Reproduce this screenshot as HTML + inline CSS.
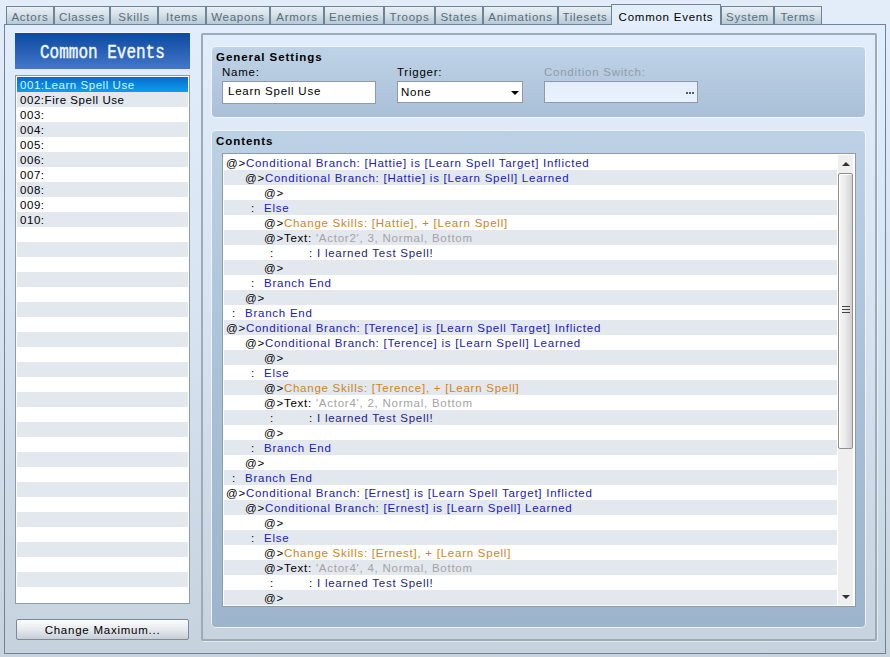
<!DOCTYPE html><html><head><meta charset="utf-8"><style>
*{box-sizing:border-box;margin:0;padding:0}
html,body{width:890px;height:657px;overflow:hidden}
body{position:relative;background:linear-gradient(#e3edf9 0%,#d8e3ef 45%,#c8d3de 100%);font-family:"Liberation Sans", sans-serif;font-size:11.5px;color:#000;letter-spacing:0.75px}
.a{position:absolute}
.t{position:absolute;white-space:pre;line-height:15px;height:15px}
.tab{position:absolute;top:6px;height:18px;border:1px solid #6f8296;border-bottom:none;
  background:linear-gradient(#e8eff5 0%,#d8e3eb 40%,#b5cad3 100%);color:#5a6b7c;text-align:center;line-height:15px;padding-top:3px}
.tabsel{position:absolute;top:4px;height:21px;border:1px solid #6f8296;border-bottom:none;background:#e2eefa;color:#000;text-align:center;line-height:15px;padding-top:5px;z-index:3}
#panel{left:4px;top:24px;width:882px;height:630px;border:1px solid #6f8296;background:linear-gradient(#e1edfa 0%,#d9e5f2 40%,#c6d2de 100%)}
#title{left:15px;top:33px;width:175px;height:36px;background:linear-gradient(#0b4b9e 0%,#2a62b8 55%,#4577c8 100%);box-shadow:0 -1px 0 #f2f8ff}
#title span{position:absolute;left:25px;top:9px;font-family:"Liberation Mono",monospace;font-size:16px;color:#f2fbff;-webkit-text-stroke:0.35px #f2fbff;letter-spacing:0;transform:scaleY(1.25);transform-origin:0 0;line-height:18px}
#llist{left:15px;top:75px;width:175px;height:529px;border:1px solid #8d9bab;background:#fff;overflow:hidden}
.row{position:absolute;height:15px}
.g{background:#e3e8ef}
#btn{left:16px;top:619px;width:173px;height:21px;border:1px solid #7c8a99;border-radius:2px;background:linear-gradient(#fbfcfd 0%,#e6e9ee 50%,#c9ced6 100%);text-align:center;line-height:17px;padding-top:2px}
#frame{left:201px;top:33px;width:676px;height:608px;border:2px solid #9babba;border-radius:2px;box-shadow:1px 1px 0 rgba(245,250,255,0.6)}
.grp{position:absolute;left:212px;width:653px;border-radius:4px;box-shadow:0 0 0 1px rgba(242,248,255,0.85)}
#g1{top:47px;height:70px;background:linear-gradient(#bfd3e6,#aac0d8)}
#g2{top:131px;height:496px;background:linear-gradient(#bcd1e4 0%,#a8bfd7 55%,#9cb4cc 100%)}
.lbl{position:absolute;white-space:pre;line-height:15px}
.box{position:absolute;height:22px;border:1px solid #8c9aab;background:#fff}
#clist{left:222px;top:153px;width:634px;height:454px;border:1px solid #8d9bab;background:#fff;overflow:hidden}
.bl{color:#2020b4}
.or{color:#d08420}
.gy{color:#a3a3a3}
.nv{color:#26267a}
</style></head><body><div class="a" id="panel"></div>
<div class="tab" style="left:6px;width:48px">Actors</div>
<div class="tab" style="left:54px;width:56px">Classes</div>
<div class="tab" style="left:110px;width:48px">Skills</div>
<div class="tab" style="left:158px;width:48px">Items</div>
<div class="tab" style="left:206px;width:64px">Weapons</div>
<div class="tab" style="left:270px;width:54px">Armors</div>
<div class="tab" style="left:324px;width:60px">Enemies</div>
<div class="tab" style="left:384px;width:51px">Troops</div>
<div class="tab" style="left:435px;width:48px">States</div>
<div class="tab" style="left:483px;width:75px">Animations</div>
<div class="tab" style="left:558px;width:54px">Tilesets</div>
<div class="tabsel" style="left:611px;width:110px">Common Events</div>
<div class="tab" style="left:721px;width:53px">System</div>
<div class="tab" style="left:774px;width:48px">Terms</div>
<div class="a" id="title"><span>Common Events</span></div>
<div class="a" id="llist" style="letter-spacing:0.55px"><div class="row" style="left:1px;top:1px;width:171px;background:linear-gradient(#0b6acb,#0a9ff0);color:#cff9ff"><span class="t" style="left:3px;top:1px">001:Learn Spell Use</span></div><div class="row" style="left:1px;top:16px;width:171px;background:#e3e8ef"><span class="t" style="left:3px;top:1px">002:Fire Spell Use</span></div><div class="row" style="left:1px;top:31px;width:171px;"><span class="t" style="left:3px;top:1px">003:</span></div><div class="row" style="left:1px;top:46px;width:171px;background:#e3e8ef"><span class="t" style="left:3px;top:1px">004:</span></div><div class="row" style="left:1px;top:61px;width:171px;"><span class="t" style="left:3px;top:1px">005:</span></div><div class="row" style="left:1px;top:76px;width:171px;background:#e3e8ef"><span class="t" style="left:3px;top:1px">006:</span></div><div class="row" style="left:1px;top:91px;width:171px;"><span class="t" style="left:3px;top:1px">007:</span></div><div class="row" style="left:1px;top:106px;width:171px;background:#e3e8ef"><span class="t" style="left:3px;top:1px">008:</span></div><div class="row" style="left:1px;top:121px;width:171px;"><span class="t" style="left:3px;top:1px">009:</span></div><div class="row" style="left:1px;top:136px;width:171px;background:#e3e8ef"><span class="t" style="left:3px;top:1px">010:</span></div><div class="row" style="left:1px;top:151px;width:171px;"><span class="t" style="left:3px;top:1px"></span></div><div class="row" style="left:1px;top:166px;width:171px;background:#e3e8ef"><span class="t" style="left:3px;top:1px"></span></div><div class="row" style="left:1px;top:181px;width:171px;"><span class="t" style="left:3px;top:1px"></span></div><div class="row" style="left:1px;top:196px;width:171px;background:#e3e8ef"><span class="t" style="left:3px;top:1px"></span></div><div class="row" style="left:1px;top:211px;width:171px;"><span class="t" style="left:3px;top:1px"></span></div><div class="row" style="left:1px;top:226px;width:171px;background:#e3e8ef"><span class="t" style="left:3px;top:1px"></span></div><div class="row" style="left:1px;top:241px;width:171px;"><span class="t" style="left:3px;top:1px"></span></div><div class="row" style="left:1px;top:256px;width:171px;background:#e3e8ef"><span class="t" style="left:3px;top:1px"></span></div><div class="row" style="left:1px;top:271px;width:171px;"><span class="t" style="left:3px;top:1px"></span></div><div class="row" style="left:1px;top:286px;width:171px;background:#e3e8ef"><span class="t" style="left:3px;top:1px"></span></div><div class="row" style="left:1px;top:301px;width:171px;"><span class="t" style="left:3px;top:1px"></span></div><div class="row" style="left:1px;top:316px;width:171px;background:#e3e8ef"><span class="t" style="left:3px;top:1px"></span></div><div class="row" style="left:1px;top:331px;width:171px;"><span class="t" style="left:3px;top:1px"></span></div><div class="row" style="left:1px;top:346px;width:171px;background:#e3e8ef"><span class="t" style="left:3px;top:1px"></span></div><div class="row" style="left:1px;top:361px;width:171px;"><span class="t" style="left:3px;top:1px"></span></div><div class="row" style="left:1px;top:376px;width:171px;background:#e3e8ef"><span class="t" style="left:3px;top:1px"></span></div><div class="row" style="left:1px;top:391px;width:171px;"><span class="t" style="left:3px;top:1px"></span></div><div class="row" style="left:1px;top:406px;width:171px;background:#e3e8ef"><span class="t" style="left:3px;top:1px"></span></div><div class="row" style="left:1px;top:421px;width:171px;"><span class="t" style="left:3px;top:1px"></span></div><div class="row" style="left:1px;top:436px;width:171px;background:#e3e8ef"><span class="t" style="left:3px;top:1px"></span></div><div class="row" style="left:1px;top:451px;width:171px;"><span class="t" style="left:3px;top:1px"></span></div><div class="row" style="left:1px;top:466px;width:171px;background:#e3e8ef"><span class="t" style="left:3px;top:1px"></span></div><div class="row" style="left:1px;top:481px;width:171px;"><span class="t" style="left:3px;top:1px"></span></div><div class="row" style="left:1px;top:496px;width:171px;background:#e3e8ef"><span class="t" style="left:3px;top:1px"></span></div><div class="row" style="left:1px;top:511px;width:171px;"><span class="t" style="left:3px;top:1px"></span></div></div>
<div class="a" id="btn">Change Maximum...</div>
<div class="a" id="frame"></div>
<div class="grp" id="g1"></div>
<div class="grp" id="g2"></div>
<div class="lbl" style="left:216px;top:50px;font-weight:bold;font-size:11.5px;letter-spacing:0.95px">General Settings</div>
<div class="lbl" style="left:222px;top:65px">Name:</div>
<div class="lbl" style="left:397px;top:65px">Trigger:</div>
<div class="lbl" style="left:544px;top:65px;color:#8e9cab">Condition Switch:</div>
<div class="box" style="left:222px;top:81px;width:154px;height:23px"><span class="t" style="left:5px;top:2px">Learn Spell Use</span></div>
<div class="box" style="left:397px;top:81px;width:126px"><span class="t" style="left:3px;top:3px">None</span><svg class="a" style="left:113px;top:9px" width="8" height="5"><path d="M0 0H8L4 4Z" fill="#000"/></svg></div>
<div class="box" style="left:544px;top:81px;width:154px;background:linear-gradient(#e2edf9,#eaf3fd)"><div class="a" style="left:141px;top:10px;width:2px;height:2px;background:#5a5a5a"></div><div class="a" style="left:144px;top:10px;width:2px;height:2px;background:#5a5a5a"></div><div class="a" style="left:147px;top:10px;width:2px;height:2px;background:#5a5a5a"></div></div>
<div class="lbl" style="left:216px;top:134px;font-weight:bold;font-size:11.5px;letter-spacing:0.95px">Contents</div>
<div class="a" id="clist"><div class="row" style="left:1px;top:1px;width:613px;"></div><div class="row" style="left:1px;top:16px;width:613px;background:#e3e8ef"></div><div class="row" style="left:1px;top:31px;width:613px;"></div><div class="row" style="left:1px;top:46px;width:613px;background:#e3e8ef"></div><div class="row" style="left:1px;top:61px;width:613px;"></div><div class="row" style="left:1px;top:76px;width:613px;background:#e3e8ef"></div><div class="row" style="left:1px;top:91px;width:613px;"></div><div class="row" style="left:1px;top:106px;width:613px;background:#e3e8ef"></div><div class="row" style="left:1px;top:121px;width:613px;"></div><div class="row" style="left:1px;top:136px;width:613px;background:#e3e8ef"></div><div class="row" style="left:1px;top:151px;width:613px;"></div><div class="row" style="left:1px;top:166px;width:613px;background:#e3e8ef"></div><div class="row" style="left:1px;top:181px;width:613px;"></div><div class="row" style="left:1px;top:196px;width:613px;background:#e3e8ef"></div><div class="row" style="left:1px;top:211px;width:613px;"></div><div class="row" style="left:1px;top:226px;width:613px;background:#e3e8ef"></div><div class="row" style="left:1px;top:241px;width:613px;"></div><div class="row" style="left:1px;top:256px;width:613px;background:#e3e8ef"></div><div class="row" style="left:1px;top:271px;width:613px;"></div><div class="row" style="left:1px;top:286px;width:613px;background:#e3e8ef"></div><div class="row" style="left:1px;top:301px;width:613px;"></div><div class="row" style="left:1px;top:316px;width:613px;background:#e3e8ef"></div><div class="row" style="left:1px;top:331px;width:613px;"></div><div class="row" style="left:1px;top:346px;width:613px;background:#e3e8ef"></div><div class="row" style="left:1px;top:361px;width:613px;"></div><div class="row" style="left:1px;top:376px;width:613px;background:#e3e8ef"></div><div class="row" style="left:1px;top:391px;width:613px;"></div><div class="row" style="left:1px;top:406px;width:613px;background:#e3e8ef"></div><div class="row" style="left:1px;top:421px;width:613px;"></div><div class="row" style="left:1px;top:436px;width:613px;background:#e3e8ef"></div><span class="t" style="left:3px;top:2px"><span class="">@&gt;</span><span class="bl">Conditional Branch: [Hattie] is [Learn Spell Target] Inflicted</span></span><span class="t" style="left:22px;top:17px"><span class="">@&gt;</span><span class="bl">Conditional Branch: [Hattie] is [Learn Spell] Learned</span></span><span class="t" style="left:41px;top:32px"><span class="">@&gt;</span></span><span class="t" style="left:28px;top:47px">:</span><span class="t bl" style="left:41px;top:47px">Else</span><span class="t" style="left:41px;top:62px"><span class="">@&gt;</span><span class="or">Change Skills: [Hattie], + [Learn Spell]</span></span><span class="t" style="left:41px;top:77px"><span class="">@&gt;Text: </span><span class="gy">&#x27;Actor2&#x27;, 3, Normal, Bottom</span></span><span class="t" style="left:47px;top:92px">:</span><span class="t" style="left:86px;top:92px">:</span><span class="t nv" style="left:94px;top:92px">I learned Test Spell!</span><span class="t" style="left:41px;top:107px"><span class="">@&gt;</span></span><span class="t" style="left:28px;top:122px">:</span><span class="t bl" style="left:41px;top:122px">Branch End</span><span class="t" style="left:22px;top:137px"><span class="">@&gt;</span></span><span class="t" style="left:9px;top:152px">:</span><span class="t bl" style="left:22px;top:152px">Branch End</span><span class="t" style="left:3px;top:167px"><span class="">@&gt;</span><span class="bl">Conditional Branch: [Terence] is [Learn Spell Target] Inflicted</span></span><span class="t" style="left:22px;top:182px"><span class="">@&gt;</span><span class="bl">Conditional Branch: [Terence] is [Learn Spell] Learned</span></span><span class="t" style="left:41px;top:197px"><span class="">@&gt;</span></span><span class="t" style="left:28px;top:212px">:</span><span class="t bl" style="left:41px;top:212px">Else</span><span class="t" style="left:41px;top:227px"><span class="">@&gt;</span><span class="or">Change Skills: [Terence], + [Learn Spell]</span></span><span class="t" style="left:41px;top:242px"><span class="">@&gt;Text: </span><span class="gy">&#x27;Actor4&#x27;, 2, Normal, Bottom</span></span><span class="t" style="left:47px;top:257px">:</span><span class="t" style="left:86px;top:257px">:</span><span class="t nv" style="left:94px;top:257px">I learned Test Spell!</span><span class="t" style="left:41px;top:272px"><span class="">@&gt;</span></span><span class="t" style="left:28px;top:287px">:</span><span class="t bl" style="left:41px;top:287px">Branch End</span><span class="t" style="left:22px;top:302px"><span class="">@&gt;</span></span><span class="t" style="left:9px;top:317px">:</span><span class="t bl" style="left:22px;top:317px">Branch End</span><span class="t" style="left:3px;top:332px"><span class="">@&gt;</span><span class="bl">Conditional Branch: [Ernest] is [Learn Spell Target] Inflicted</span></span><span class="t" style="left:22px;top:347px"><span class="">@&gt;</span><span class="bl">Conditional Branch: [Ernest] is [Learn Spell] Learned</span></span><span class="t" style="left:41px;top:362px"><span class="">@&gt;</span></span><span class="t" style="left:28px;top:377px">:</span><span class="t bl" style="left:41px;top:377px">Else</span><span class="t" style="left:41px;top:392px"><span class="">@&gt;</span><span class="or">Change Skills: [Ernest], + [Learn Spell]</span></span><span class="t" style="left:41px;top:407px"><span class="">@&gt;Text: </span><span class="gy">&#x27;Actor4&#x27;, 4, Normal, Bottom</span></span><span class="t" style="left:47px;top:422px">:</span><span class="t" style="left:86px;top:422px">:</span><span class="t nv" style="left:94px;top:422px">I learned Test Spell!</span><span class="t" style="left:41px;top:437px"><span class="">@&gt;</span></span><div class="a" style="left:615px;top:1px;width:16px;height:450px;background:#efefef;border-right:1px solid #fff">
<svg class="a" style="left:4px;top:7px" width="8" height="5"><path d="M4 0L8 4H0Z" fill="#333"/></svg>
<div class="a" style="left:0;top:18px;width:15px;height:276px;border:1px solid #8f8f8f;border-radius:2px;box-shadow:inset 1px 1px 0 #fff;background:linear-gradient(90deg,#f7f7f7 0%,#ececec 45%,#d0d0d0 100%)"></div>
<div class="a" style="left:4px;top:151px;width:8px;height:1px;background:#444"></div>
<div class="a" style="left:4px;top:154px;width:8px;height:1px;background:#444"></div>
<div class="a" style="left:4px;top:157px;width:8px;height:1px;background:#444"></div>
<svg class="a" style="left:4px;top:440px" width="8" height="5"><path d="M0 0H8L4 4Z" fill="#333"/></svg>
</div></div></body></html>
